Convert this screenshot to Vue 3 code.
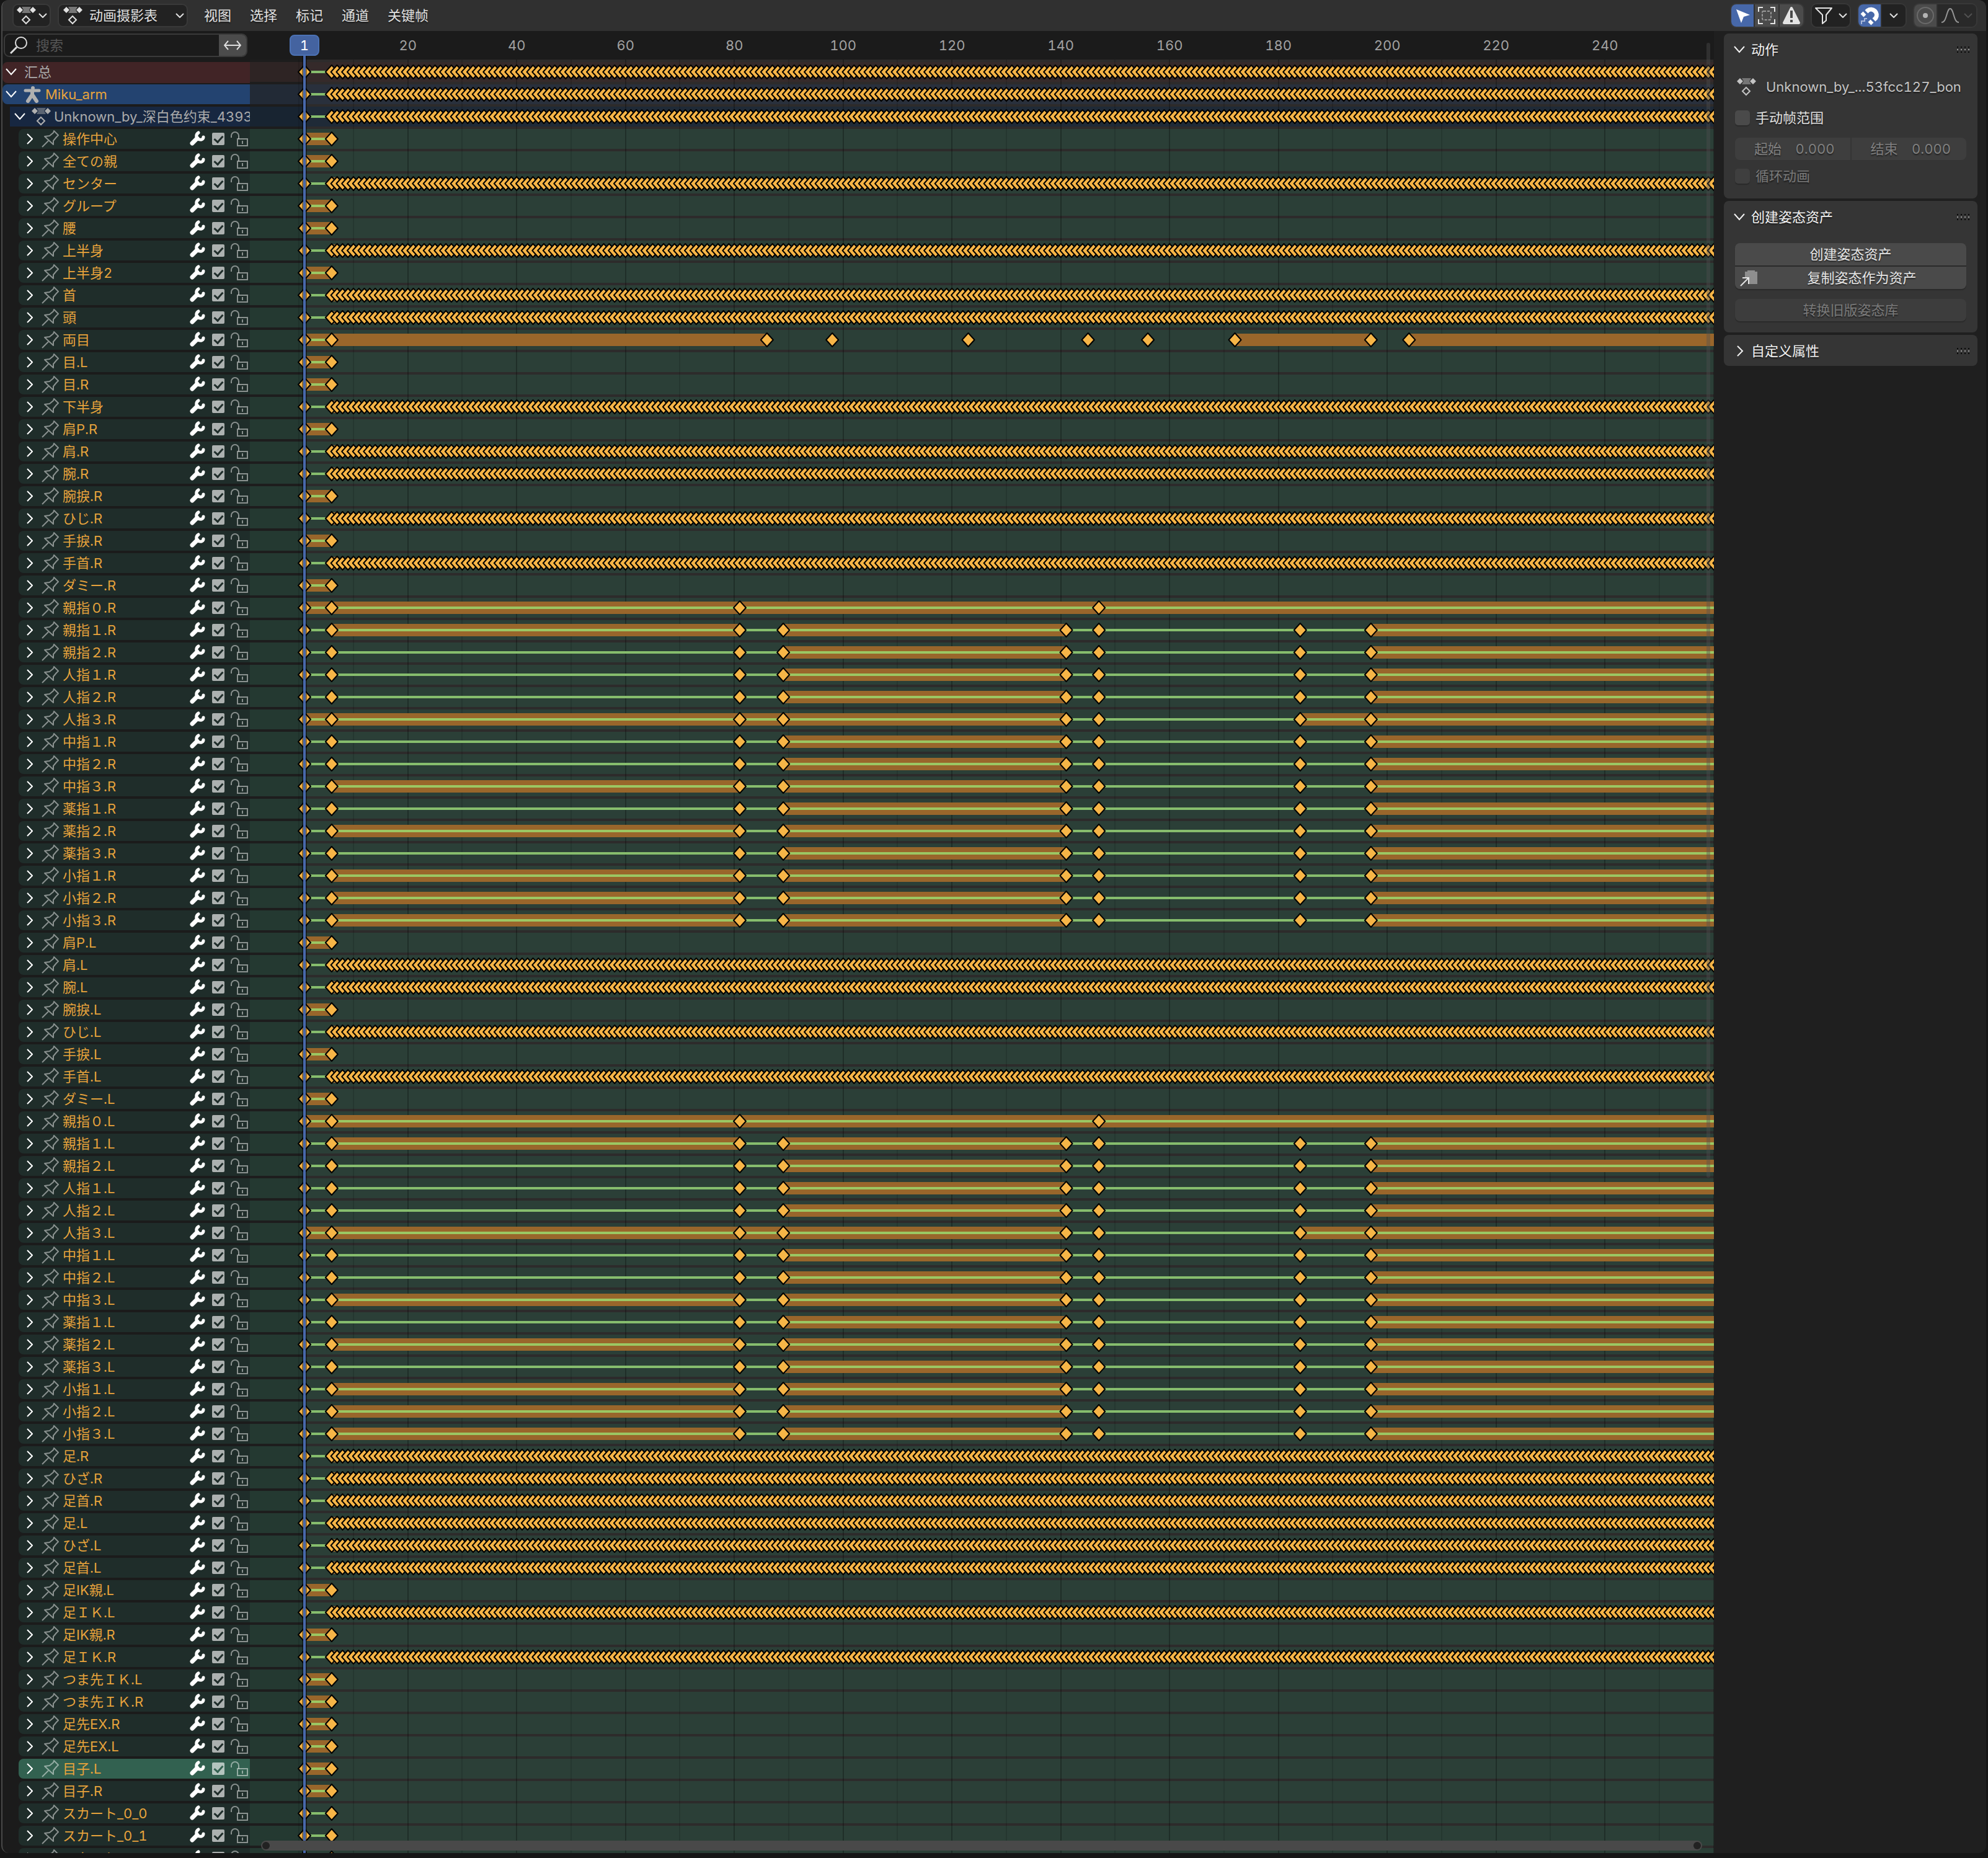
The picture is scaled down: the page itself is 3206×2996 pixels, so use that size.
<script setup>
import { ref } from 'vue'

const FRAME_WIDTH = 8.775
const FIRST_FRAME_X = 88
const LAST = 264
const frameX = (frame) => FIRST_FRAME_X + (frame - 1) * FRAME_WIDTH

const denseFrames = Array.from({ length: LAST - 5 }, (_, i) => i + 6)
const gridFrames = Array.from({ length: 27 }, (_, i) => i * 10)
const labelFrames = [20, 40, 60, 80, 100, 120, 140, 160, 180, 200, 220, 240]
const currentFrame = 1

// Lane kinds: bars are held (unchanged) ranges, lines are linear ranges.
const fingerKeys = [1, 6, 81, 89, 141, 147, 184, 197]
const kinds = {
  summary: { dense: true, keys: [1], bars: [], lines: [[1, 6]] },
  dense: { dense: true, keys: [1], bars: [[6, 7]], lines: [[1, 6]] },
  short: { keys: [1, 6], bars: [[1, 6]], lines: [[1, 6]] },
  plain: { keys: [1, 6], bars: [], lines: [[1, 6]] },
  eyes: {
    keys: [1, 6, 86, 98, 123, 145, 156, 172, 197, 204],
    bars: [[1, 86], [172, 197], [204, LAST]],
    lines: [[1, 6]],
  },
  thumb0: { keys: [1, 6, 81, 147], bars: [[1, LAST]], lines: [[1, LAST]] },
  fingerHold: { keys: fingerKeys, bars: [[6, 81], [89, 141], [197, LAST]], lines: [[1, LAST]] },
  finger: { keys: fingerKeys, bars: [[89, 141], [197, LAST]], lines: [[1, LAST]] },
  fingerWide: { keys: fingerKeys, bars: [[1, 141], [184, LAST]], lines: [[1, LAST]] },
}

const arm = (side) => [
  ['肩P', 'short'], ['肩', 'dense'], ['腕', 'dense'], ['腕捩', 'short'], ['ひじ', 'dense'],
  ['手捩', 'short'], ['手首', 'dense'], ['ダミー', 'short'],
  ['親指０', 'thumb0'], ['親指１', 'fingerHold'], ['親指２', 'finger'],
  ['人指１', 'finger'], ['人指２', 'finger'], ['人指３', 'fingerWide'],
  ['中指１', 'finger'], ['中指２', 'finger'], ['中指３', 'fingerHold'],
  ['薬指１', 'finger'], ['薬指２', 'fingerHold'], ['薬指３', 'finger'],
  ['小指１', 'fingerHold'], ['小指２', 'fingerHold'], ['小指３', 'fingerHold'],
].map(([name, kind]) => [`${name}.${side}`, kind])

const bones = [
  ['操作中心', 'short'], ['全ての親', 'short'], ['センター', 'dense'], ['グループ', 'short'],
  ['腰', 'short'], ['上半身', 'dense'], ['上半身2', 'short'], ['首', 'dense'], ['頭', 'dense'],
  ['両目', 'eyes'], ['目.L', 'short'], ['目.R', 'short'], ['下半身', 'dense'],
  ...arm('R'),
  ...arm('L'),
  ['足.R', 'dense'], ['ひざ.R', 'dense'], ['足首.R', 'dense'],
  ['足.L', 'dense'], ['ひざ.L', 'dense'], ['足首.L', 'dense'],
  ['足IK親.L', 'short'], ['足ＩＫ.L', 'dense'], ['足IK親.R', 'short'], ['足ＩＫ.R', 'dense'],
  ['つま先ＩＫ.L', 'short'], ['つま先ＩＫ.R', 'short'], ['足先EX.R', 'short'], ['足先EX.L', 'short'],
  ['目子.L', 'short'], ['目子.R', 'short'],
  ['スカート_0_0', 'plain'], ['スカート_0_1', 'plain'], ['スカート_0_2', 'plain'],
].map(([name, kind]) => ({ name, kind, selected: name === '目子.L', enabled: true }))

const rows = ref(bones)
const lanes = [
  { type: 'summary', kind: 'summary' },
  { type: 'object', kind: 'summary' },
  { type: 'action', kind: 'summary' },
  ...bones.map((bone) => ({ type: 'bone', kind: bone.kind })),
].map((lane) => ({ type: lane.type, ...kinds[lane.kind] }))

const menus = ['视图', '选择', '标记', '通道', '关键帧']
const dots = [0, 6, 12, 18]
const search = ref('')
const manualRange = ref(false)
const cyclic = ref(false)
const rangeStart = ref('0.000')
const rangeEnd = ref('0.000')
</script>

<template>
  <div class="app">
    <svg class="defs" width="0" height="0" aria-hidden="true">
      <defs>
        <path id="key" d="M0-11 10 0 0 11-10 0Z" fill="#f6b547" stroke="#000" stroke-width="2" stroke-linejoin="round" />
        <g id="dense-keys">
          <use v-for="f in denseFrames" :key="f" href="#key" :x="frameX(f)" y="16" />
        </g>
        <g id="dope">
          <path d="M6 1 11 6 6 11 1 6ZM27 1 32 6 27 11 22 6Z" fill="currentColor" />
          <path d="M9 1H24L21 6 24 11H9L12 6Z" fill="currentColor" opacity=".45" />
          <path d="M16 16 22 22 16 28 10 22Z" fill="none" stroke="currentColor" stroke-width="2" />
        </g>
        <path id="down" d="M1 1 7 7 13 1" fill="none" stroke="currentColor" stroke-width="2" />
        <path id="down-big" d="M1 1 9 10 17 1" fill="none" stroke="currentColor" stroke-width="2" />
        <path id="right-big" d="M1 1 9 9 1 17" fill="none" stroke="currentColor" stroke-width="2" />
        <g id="pin" fill="none" stroke="currentColor" stroke-width="2" stroke-linejoin="round">
          <path d="M20 2 19 5 13 10 5 11 19 24 19 18 24 12 27 9Z" />
          <path d="M1 28 11 18" />
        </g>
        <g id="wrench" fill="none" stroke="currentColor" stroke-linecap="round">
          <path d="M4 20 12 12" stroke-width="7" />
          <path d="M14 3C9 6 10 14 16 14 19 15 22 13 22 10" stroke-width="5" />
        </g>
        <g id="lock" fill="none" stroke="currentColor" stroke-width="2">
          <path d="M1 10V7A6 6 0 0 1 13 7V12" />
          <path d="M11 12H27V23H11Z" />
          <path d="M19 15V20" />
        </g>
        <g id="grip">
          <template v-for="x in dots" :key="x">
            <rect :x="x" y="0" width="2" height="2" fill="#080808" />
            <rect :x="x" y="4" width="2" height="2" fill="#9a9a9a" />
            <rect :x="x" y="8" width="2" height="2" fill="#080808" />
          </template>
        </g>
      </defs>
    </svg>

    <div class="editor">
      <header class="header">
        <button class="editor-type" aria-label="编辑器类型">
          <svg width="34" height="30"><use href="#dope" /></svg>
          <svg width="14" height="8"><use href="#down" /></svg>
        </button>
        <label class="mode">
          <svg width="34" height="30"><use href="#dope" /></svg>
          <select aria-label="模式"><option>动画摄影表</option></select>
          <svg width="14" height="8"><use href="#down" /></svg>
        </label>
        <nav class="menus">
          <button v-for="m in menus" :key="m">{{ m }}</button>
        </nav>

        <div class="tools">
          <div class="group">
            <button class="tool on" aria-label="仅显示选中项">
              <svg width="36" height="36"><path d="M8 8 30 17 20 20 16 30Z" fill="#fff" /></svg>
            </button>
            <button class="tool grey" aria-label="显示隐藏项">
              <svg width="36" height="36" fill="none" stroke-width="2">
                <path d="M5 12V5H12M24 5H31V12M31 24V31H24M12 31H5V24" stroke="#e4e4e4" />
                <rect x="11" y="11" width="14" height="14" rx="2" stroke="#999" stroke-dasharray="4 2" />
              </svg>
            </button>
            <button class="tool grey" aria-label="仅显示错误">
              <svg width="36" height="36">
                <path d="M18 6 30 30H6Z" fill="#e4e4e4" stroke="#e4e4e4" stroke-width="4" stroke-linejoin="round" />
                <path d="M18 10V22M18 25V29" stroke="#4a4a4a" stroke-width="4" />
              </svg>
            </button>
          </div>
          <div class="group">
            <button class="tool filter" aria-label="过滤">
              <svg width="29" height="29"><path d="M1 2H27L18 13V22L12 27V13Z" fill="none" stroke="#e4e4e4" stroke-width="2" stroke-linejoin="round" /></svg>
              <svg width="14" height="8"><use href="#down" /></svg>
            </button>
          </div>
          <div class="group">
            <button class="tool on" aria-label="吸附">
              <svg width="36" height="36" fill="none" stroke="#fff" stroke-width="7">
                <path d="M13 12 15 10A9 9 0 0 1 28 22L25 25" />
                <path d="M6 18 10 14M18 31 22 27" />
                <path d="M5 32V27H10V23H14" stroke="#a9b8da" stroke-width="2" />
              </svg>
            </button>
            <button class="tool" aria-label="吸附选项"><svg width="14" height="8"><use href="#down" /></svg></button>
          </div>
          <div class="group">
            <button class="tool grey narrow" aria-label="衰减编辑">
              <svg width="36" height="36">
                <circle cx="18" cy="18" r="13" fill="none" stroke="#6a6a6a" stroke-width="2" />
                <circle cx="18" cy="18" r="4" fill="#b4b4b4" />
              </svg>
            </button>
            <button class="tool falloff" aria-label="衰减类型">
              <svg width="28" height="26"><path d="M0 24C9 24 8 2 14 2S19 24 28 24" fill="none" stroke="#969696" stroke-width="2" /></svg>
              <svg class="faint" width="14" height="8"><use href="#down" /></svg>
            </button>
          </div>
        </div>
      </header>

      <div class="body">
        <section class="channels">
          <div class="search">
            <label class="search-field">
              <svg width="30" height="30" fill="none" stroke="#dedede" stroke-width="2">
                <circle cx="18" cy="11" r="9" /><path d="M1 28 11 18" stroke-width="3" />
              </svg>
              <input v-model="search" type="text" placeholder="搜索" aria-label="搜索" />
            </label>
            <button class="invert" aria-label="反转">
              <svg width="28" height="16" fill="none" stroke="#dedede" stroke-width="2"><path d="M1 8H27M7 1 1 8 7 15M21 1 27 8 21 15" /></svg>
            </button>
          </div>

          <div class="list">
            <div class="row summary">
              <svg width="18" height="12"><use href="#down-big" /></svg>
              <span class="name">汇总</span>
            </div>
            <div class="row object">
              <svg width="18" height="12"><use href="#down-big" /></svg>
              <svg class="figure" width="28" height="30" fill="none" stroke="#b0b0b0" stroke-width="6" stroke-linecap="round">
                <circle cx="15" cy="5" r="3" fill="#b0b0b0" stroke="none" />
                <path d="M3 9H25" stroke-width="5" />
                <path d="M14 10V17M13 17 7 26M15 17 21 26" />
              </svg>
              <span class="name">Miku_arm</span>
            </div>
            <div class="row action">
              <svg width="18" height="12"><use href="#down-big" /></svg>
              <svg class="sheet" width="34" height="30"><use href="#dope" /></svg>
              <span class="name">Unknown_by_深白色约束_4393</span>
            </div>
            <div v-for="row in rows" :key="row.name" class="row bone" :class="{ selected: row.selected }">
              <svg width="10" height="18"><use href="#right-big" /></svg>
              <svg class="pin" width="28" height="30"><use href="#pin" /></svg>
              <span class="name">{{ row.name }}</span>
              <button class="mod" aria-label="修改器"><svg width="26" height="26"><use href="#wrench" /></svg></button>
              <input v-model="row.enabled" type="checkbox" :aria-label="row.name" />
              <button class="lock" aria-label="锁定"><svg width="28" height="24"><use href="#lock" /></svg></button>
            </div>
          </div>
        </section>

        <section class="timeline">
          <div class="ruler">
            <span v-for="f in labelFrames" :key="f" class="tick" :style="{ left: frameX(f) + 'px' }">{{ f }}</span>
          </div>
          <div class="lanes">
            <svg class="grid" width="100%" height="100%">
              <rect
                v-for="f in gridFrames" :key="f"
                :x="Math.round(frameX(f)) - 1" y="0" width="2" height="100%"
                :fill-opacity="f && f % 20 === 0 ? 0.26 : 0.12"
              />
            </svg>
            <div v-for="(lane, i) in lanes" :key="i" class="lane" :class="lane.type">
              <svg width="100%" height="32">
                <rect v-for="b in lane.bars" :key="'b' + b[0]" :x="frameX(b[0])" y="6" :width="frameX(b[1]) - frameX(b[0])" height="20" fill="#99662b" />
                <rect v-for="l in lane.lines" :key="'l' + l[0]" :x="frameX(l[0])" y="14" :width="frameX(l[1]) - frameX(l[0])" height="4" fill="#86bd6d" />
                <rect v-for="b in lane.lines.length ? lane.bars : []" :key="'m' + b[0]" :x="frameX(b[0])" y="14" :width="Math.max(0, Math.min(frameX(b[1]), frameX(lane.lines[0][1])) - frameX(b[0]))" height="4" fill="#9bc763" />
                <use v-for="k in lane.keys" :key="k" href="#key" :x="frameX(k)" y="16" />
                <use v-if="lane.dense" href="#dense-keys" />
              </svg>
            </div>
          </div>
          <div class="playhead" :style="{ left: frameX(currentFrame) + 'px' }">
            <span class="playhead-label">{{ currentFrame }}</span>
            <span class="playhead-line"></span>
          </div>
          <div class="vbar"></div>
          <div class="hbar"><i></i><i></i></div>
        </section>

        <aside class="sidebar">
          <section class="panel">
            <h2>
              <svg width="18" height="12"><use href="#down-big" /></svg>动作
              <svg class="grip" width="20" height="10"><use href="#grip" /></svg>
            </h2>
            <div class="panel-body">
              <div class="line datablock">
                <svg width="34" height="30"><use href="#dope" /></svg>
                <span>Unknown_by_...53fcc127_bon</span>
              </div>
              <label class="line check range"><input v-model="manualRange" type="checkbox" />手动帧范围</label>
              <div class="fields">
                <label>起始<input v-model="rangeStart" type="text" disabled /></label>
                <label>结束<input v-model="rangeEnd" type="text" disabled /></label>
              </div>
              <label class="line check off"><input v-model="cyclic" type="checkbox" disabled />循环动画</label>
            </div>
          </section>

          <section class="panel">
            <h2>
              <svg width="18" height="12"><use href="#down-big" /></svg>创建姿态资产
              <svg class="grip" width="20" height="10"><use href="#grip" /></svg>
            </h2>
            <div class="panel-body">
              <button class="wide top">创建姿态资产</button>
              <button class="wide bottom">
                <svg width="28" height="28">
                  <path d="M12 2H24V4H28V24H14V14H8V4H12Z" fill="#8e8e8e" />
                  <path d="M1 27 13 15M4 14H14V24" fill="none" stroke="#e4e4e4" stroke-width="2" />
                </svg>
                <span>复制姿态作为资产</span>
              </button>
              <button class="wide alone" disabled>转换旧版姿态库</button>
            </div>
          </section>

          <section class="panel">
            <h2>
              <svg width="18" height="18"><use href="#right-big" x="5" /></svg>自定义属性
              <svg class="grip" width="20" height="10"><use href="#grip" /></svg>
            </h2>
          </section>
        </aside>
      </div>
    </div>
  </div>
</template>

<style>
body {
  margin: 0;
  background: #161616;
}
</style>

<style scoped>
.app,
.app * {
  box-sizing: border-box;
}
.app {
  height: 100vh;
  padding: 0 3px 8px 2px;
  background: #161616;
  color: #e0e0e0;
  font: 22px/32px Inter, "Noto Sans CJK SC", sans-serif;
  font-variant-numeric: tabular-nums;
  display: flex;
}
.defs {
  position: absolute;
}
svg {
  display: block;
  flex: none;
}
button,
input,
select {
  font: inherit;
  font-variant-numeric: inherit;
  color: inherit;
  background: none;
  border: 0;
  margin: 0;
  padding: 0;
  outline: 0;
  appearance: none;
}
button {
  display: flex;
  align-items: center;
  justify-content: center;
  text-shadow: inherit;
}
.editor {
  flex: 1;
  min-width: 0;
  display: flex;
  flex-direction: column;
  overflow: hidden;
  border-left: 2px solid #484848;
  border-radius: 12px;
  background: #1b1b1b;
}

/* header */
.header {
  flex: none;
  height: 50px;
  padding: 0 16px;
  display: flex;
  align-items: center;
  background: #303030;
  text-shadow: 0 2px 2px rgba(0, 0, 0, 0.5);
}
.editor-type,
.mode {
  height: 38px;
  border: 2px solid #393939;
  border-radius: 9px;
  background: #222;
  display: flex;
  align-items: center;
}
.editor-type {
  width: 62px;
  gap: 2px;
}
.mode {
  width: 210px;
  margin-left: 11px;
  padding: 0 4px 0 6px;
}
.mode select {
  flex: 1;
  min-width: 0;
  margin-left: 9px;
  text-shadow: inherit;
}
.menus {
  display: flex;
  gap: 30px;
  margin-left: 26px;
}
.tools {
  margin-left: auto;
  display: flex;
  gap: 14px;
}
.group {
  display: flex;
  gap: 2px;
  height: 36px;
  border-radius: 8px;
  overflow: hidden;
  box-shadow: 0 0 0 2px #383838;
}
.tool {
  min-width: 38px;
  height: 36px;
  background: #222;
}
.tool.on {
  min-width: 36px;
  background: #4768a9;
}
.tool.grey {
  background: #4b4b4b;
}
.tool.narrow {
  min-width: 36px;
}
.tool.filter {
  width: 61px;
  gap: 9px;
}
.tool.falloff {
  width: 62px;
  gap: 8px;
  background: #292929;
}
.faint {
  color: #515151;
}

/* body columns */
.body {
  flex: 1;
  min-height: 0;
  display: grid;
  grid-template-columns: 399px 1fr 439px;
}
.channels,
.timeline {
  min-width: 0;
  min-height: 0;
  overflow: hidden;
  display: flex;
  flex-direction: column;
}

/* channel list */
.search {
  flex: none;
  height: 38px;
  margin: 4px 4px 8px 2px;
  display: flex;
  border: 2px solid #3a3a3a;
  border-radius: 9px;
  overflow: hidden;
}
.search-field {
  flex: 1;
  min-width: 0;
  display: flex;
  align-items: center;
  padding-left: 8px;
}
.search-field input {
  flex: 1;
  min-width: 0;
  margin-left: 12px;
}
.search-field input::placeholder {
  color: #565656;
  opacity: 1;
}
.invert {
  flex: none;
  width: 44px;
  background: #4b4b4b;
}
.row {
  height: 32px;
  margin-bottom: 4px;
  display: flex;
  align-items: center;
  overflow: hidden;
  white-space: nowrap;
  border-radius: 8px 0 0 8px;
  color: #fff;
}
.row .name {
  color: #e7a33c;
}
.row.summary {
  height: 34px;
  margin-bottom: 2px;
  padding: 0 0 2px 5px;
  background: #412426;
}
.row.summary .name {
  margin-left: 12px;
  color: #ababab;
}
.row.object {
  padding-left: 5px;
  background: #234370;
}
.figure {
  margin-left: 11px;
}
.row.object .name {
  margin-left: 7px;
}
.row.action {
  margin-left: 12px;
  padding-left: 7px;
  border-radius: 0;
  background: #172741;
}
.sheet {
  margin-left: 9px;
  color: #b0b0b0;
}
.row.action .name {
  margin-left: 3px;
  color: #ababab;
}
.row.bone {
  margin-left: 26px;
  padding: 0 3px 0 13px;
  background: #1f2d2a;
}
.row.bone.selected {
  background: #326150;
}
.pin {
  margin-left: 14px;
  color: rgba(255, 255, 255, 0.48);
}
.row.bone .name {
  flex: 1;
  margin-left: 6px;
}
.row.bone input {
  width: 20px;
  height: 20px;
  margin: 0 10px;
  border-radius: 2px;
  background: rgba(255, 255, 255, 0.63);
}
.row.bone input:checked::after {
  content: "";
  display: block;
  width: 6px;
  height: 11px;
  margin: 2px 0 0 6px;
  border: solid #1f2d2a;
  border-width: 0 3px 3px 0;
  transform: rotate(42deg);
}
.row.bone.selected input:checked::after {
  border-color: #326150;
}
.lock {
  color: rgba(255, 255, 255, 0.48);
}

/* timeline */
.timeline {
  position: relative;
}
.ruler {
  flex: none;
  height: 46px;
  position: relative;
  color: #a2a2a2;
}
.tick {
  position: absolute;
  top: 7px;
  transform: translateX(-50%);
}
.lanes {
  flex: 1;
  min-height: 0;
  overflow: hidden;
  position: relative;
  padding-top: 4px;
  background: linear-gradient(to right, #1d1d1d 88px, #2d2b2b 88px);
}
.grid {
  position: absolute;
  inset: 0;
}
.lane {
  height: 32px;
  margin-bottom: 4px;
}
.lane svg {
  position: relative;
}
.lane.summary {
  background: rgba(58, 41, 41, 0.6);
}
.lane.object {
  background: rgba(39, 51, 72, 0.6);
}
.lane.action {
  background: rgba(21, 41, 64, 0.6);
}
.lane.bone {
  background: rgba(41, 76, 64, 0.6);
}
.playhead {
  position: absolute;
  top: 6px;
  bottom: 0;
  width: 48px;
  margin-left: -24px;
  display: flex;
  flex-direction: column;
  align-items: center;
}
.playhead-label {
  width: 48px;
  height: 34px;
  border: 2px solid #4c72b4;
  border-radius: 8px;
  background: #4463a0;
  color: #fff;
  line-height: 30px;
  text-align: center;
}
.playhead-line {
  flex: 1;
  width: 4px;
  background: #4868ab;
  box-shadow: -2px 0 rgba(0, 0, 0, 0.4), 2px 0 rgba(0, 0, 0, 0.4);
}
.vbar {
  position: absolute;
  top: 19px;
  right: 6px;
  width: 6px;
  height: 62.3%;
  border-radius: 3px;
  background: rgba(80, 80, 80, 0.4);
}
.hbar {
  position: absolute;
  left: 18px;
  right: 19px;
  bottom: 4px;
  height: 16px;
  padding: 2px;
  border-radius: 8px;
  background: #494949;
  display: flex;
  justify-content: space-between;
}
.hbar i {
  width: 12px;
  height: 12px;
  border-radius: 6px;
  background: #222;
}

/* sidebar */
.sidebar {
  padding: 4px 14px 0 16px;
  background: #1f1f1f;
  display: flex;
  flex-direction: column;
  gap: 4px;
  text-shadow: 0 2px 2px rgba(0, 0, 0, 0.5);
}
.panel {
  border-radius: 8px;
  background: #353535;
}
.panel h2 {
  height: 50px;
  margin: 0;
  padding: 2px 13px 0 16px;
  display: flex;
  align-items: center;
  gap: 10px;
  font-size: 22px;
  font-weight: 400;
  color: #f2f2f2;
}
.grip {
  margin-left: auto;
}
.panel-body {
  padding: 18px;
}
.line {
  height: 36px;
  display: flex;
  align-items: center;
}
.datablock {
  padding-left: 2px;
  color: #c4c4c4;
}
.datablock span {
  margin-left: 14px;
}
.range {
  margin: 14px 0;
}
.check input {
  width: 24px;
  height: 24px;
  margin-right: 9px;
  border-radius: 5px;
  background: #4a4a4a;
  box-shadow: 0 2px 1px rgba(0, 0, 0, 0.2);
}
.check.off {
  color: #7a7a7a;
}
.check.off input {
  background: #3f3f3f;
}
.fields {
  display: grid;
  grid-template-columns: 1fr 1fr;
  gap: 2px;
  height: 36px;
  margin-bottom: 8px;
  border-radius: 8px;
  overflow: hidden;
  color: #808080;
}
.fields label {
  display: flex;
  align-items: center;
  justify-content: space-between;
  padding: 0 25px 0 31px;
  background: #3e3e3e;
}
.fields input {
  width: 80px;
  text-align: right;
  text-shadow: inherit;
}
.wide {
  width: 100%;
  height: 36px;
  background: #4a4a4a;
  color: #e6e6e6;
  box-shadow: 0 2px 1px rgba(0, 0, 0, 0.2);
}
.wide.top {
  border-radius: 8px 8px 0 0;
}
.wide.bottom {
  margin: 2px 0 16px;
  padding-left: 8px;
  border-radius: 0 0 8px 8px;
}
.wide.bottom span {
  flex: 1;
}
.wide.alone {
  border-radius: 8px;
  background: #3d3d3d;
  color: #7a7a7a;
}
</style>
